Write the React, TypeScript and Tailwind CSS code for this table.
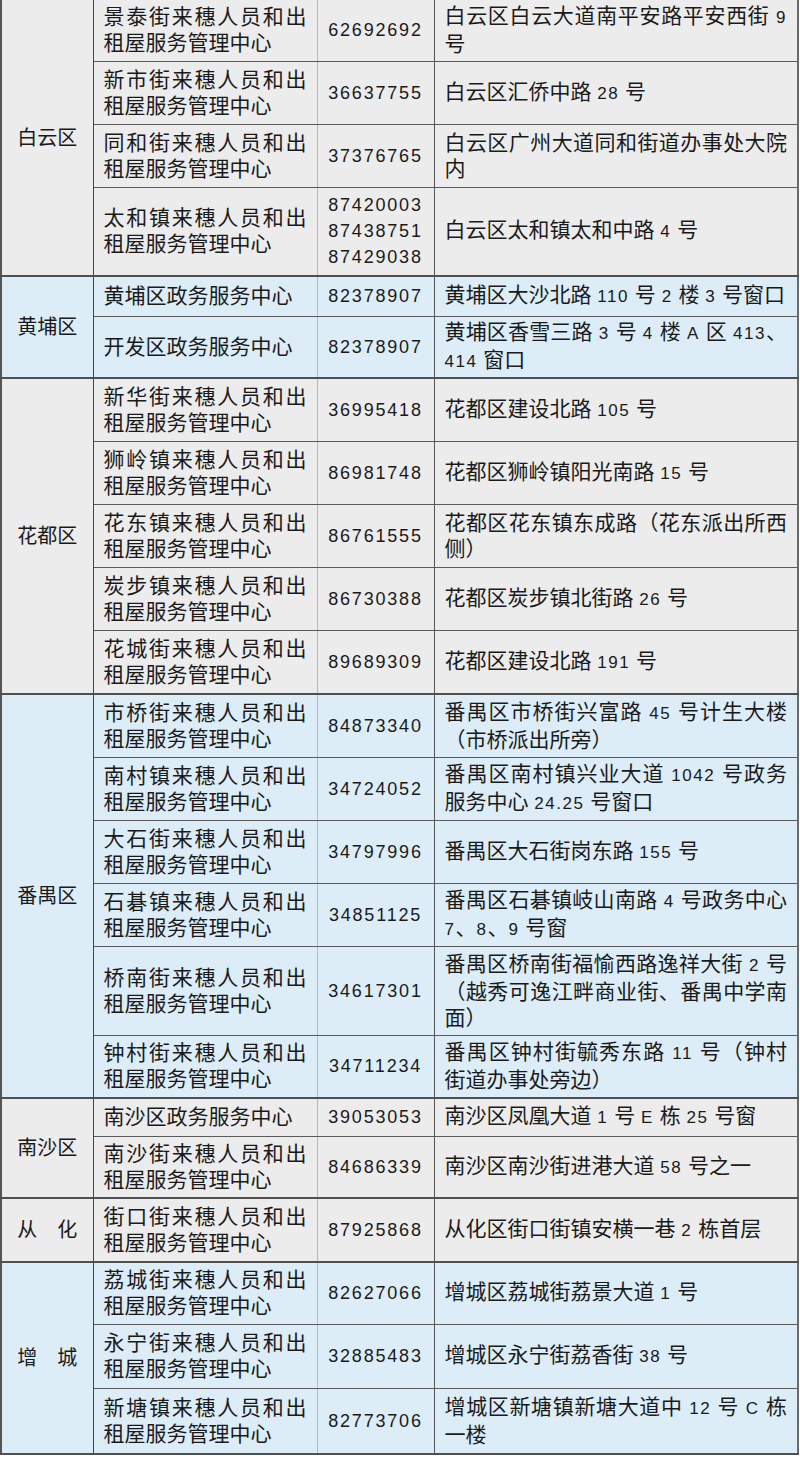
import React from "react";

type Row = { name: string; phone: string[]; addr: string; h: number };
type Group = { district: string; blue: boolean; rows: Row[] };

const heights: Record<number, string> = {
  38: "h-[38px]",
  40: "h-[40px]",
  61: "h-[61px]",
  62: "h-[62px]",
  63: "h-[63px]",
  64: "h-[64px]",
  66: "h-[66px]",
  89: "h-[89px]",
};

const svc = "来穗人员和出租屋服务管理中心";

const groups: Group[] = [
  {
    district: "白云区",
    blue: false,
    rows: [
      { name: "景泰街" + svc, phone: ["62692692"], addr: "白云区白云大道南平安路平安西街 9 号", h: 61 },
      { name: "新市街" + svc, phone: ["36637755"], addr: "白云区汇侨中路 28 号", h: 63 },
      { name: "同和街" + svc, phone: ["37376765"], addr: "白云区广州大道同和街道办事处大院内", h: 63 },
      { name: "太和镇" + svc, phone: ["87420003", "87438751", "87429038"], addr: "白云区太和镇太和中路 4 号", h: 89 },
    ],
  },
  {
    district: "黄埔区",
    blue: true,
    rows: [
      { name: "黄埔区政务服务中心", phone: ["82378907"], addr: "黄埔区大沙北路 110 号 2 楼 3 号窗口", h: 40 },
      { name: "开发区政务服务中心", phone: ["82378907"], addr: "黄埔区香雪三路 3 号 4 楼 A 区 413、414 窗口", h: 62 },
    ],
  },
  {
    district: "花都区",
    blue: false,
    rows: [
      { name: "新华街" + svc, phone: ["36995418"], addr: "花都区建设北路 105 号", h: 63 },
      { name: "狮岭镇" + svc, phone: ["86981748"], addr: "花都区狮岭镇阳光南路 15 号", h: 63 },
      { name: "花东镇" + svc, phone: ["86761555"], addr: "花都区花东镇东成路（花东派出所西侧）", h: 63 },
      { name: "炭步镇" + svc, phone: ["86730388"], addr: "花都区炭步镇北街路 26 号", h: 63 },
      { name: "花城街" + svc, phone: ["89689309"], addr: "花都区建设北路 191 号", h: 64 },
    ],
  },
  {
    district: "番禺区",
    blue: true,
    rows: [
      { name: "市桥街" + svc, phone: ["84873340"], addr: "番禺区市桥街兴富路 45 号计生大楼（市桥派出所旁）", h: 63 },
      { name: "南村镇" + svc, phone: ["34724052"], addr: "番禺区南村镇兴业大道 1042 号政务服务中心 24.25 号窗口", h: 63 },
      { name: "大石街" + svc, phone: ["34797996"], addr: "番禺区大石街岗东路 155 号", h: 63 },
      { name: "石碁镇" + svc, phone: ["34851125"], addr: "番禺区石碁镇岐山南路 4 号政务中心 7、8、9 号窗", h: 63 },
      { name: "桥南街" + svc, phone: ["34617301"], addr: "番禺区桥南街福愉西路逸祥大街 2 号（越秀可逸江畔商业街、番禺中学南面）", h: 89 },
      { name: "钟村街" + svc, phone: ["34711234"], addr: "番禺区钟村街毓秀东路 11 号（钟村街道办事处旁边）", h: 63 },
    ],
  },
  {
    district: "南沙区",
    blue: false,
    rows: [
      { name: "南沙区政务服务中心", phone: ["39053053"], addr: "南沙区凤凰大道 1 号 E 栋 25 号窗", h: 38 },
      { name: "南沙街" + svc, phone: ["84686339"], addr: "南沙区南沙街进港大道 58 号之一", h: 62 },
    ],
  },
  {
    district: "从　化",
    blue: false,
    rows: [{ name: "街口街" + svc, phone: ["87925868"], addr: "从化区街口街镇安横一巷 2 栋首层", h: 64 }],
  },
  {
    district: "增　城",
    blue: true,
    rows: [
      { name: "荔城街" + svc, phone: ["82627066"], addr: "增城区荔城街荔景大道 1 号", h: 62 },
      { name: "永宁街" + svc, phone: ["32885483"], addr: "增城区永宁街荔香街 38 号", h: 64 },
      { name: "新塘镇" + svc, phone: ["82773706"], addr: "增城区新塘镇新塘大道中 12 号 C 栋一楼", h: 66 },
    ],
  },
];

// digits and latin letters are set smaller than the hanzi, like the print
const Txt = ({ s }: { s: string }) => (
  <>
    {s.split(/([0-9A-Z.]+)/).map((part, i) =>
      /^[0-9A-Z.]+$/.test(part) ? (
        <span key={i} className="text-[17px] tracking-[1.5px]">
          {part}
        </span>
      ) : (
        <React.Fragment key={i}>{part}</React.Fragment>
      )
    )}
  </>
);

const App = () => {
  return (
    <div className="min-h-[1459px] w-[800px] bg-white font-['Liberation_Sans','Noto_Sans_CJK_SC',sans-serif] text-[#1a1a1a]">
      <table className="w-[797px] table-fixed border-collapse">
        <colgroup>
          <col className="w-[92px]" />
          <col className="w-[224px]" />
          <col className="w-[117px]" />
          <col className="w-[364px]" />
        </colgroup>
        <tbody>
          {groups.map((g) =>
            g.rows.map((r, i) => {
              const last = i === g.rows.length - 1;
              const bg = g.blue ? "bg-[#dcedf8]" : "bg-[#ececec]";
              const bb = last ? "border-b-2 border-b-[#505050]" : "border-b border-b-[#5a5a5a]";
              return (
                <tr key={g.district + r.name} className={`${heights[r.h]} ${bg}`}>
                  {i === 0 && (
                    <td
                      rowSpan={g.rows.length}
                      className="border-l-2 border-r border-b-2 border-l-[#555] border-r-[#444] border-b-[#505050] text-center text-[20px] leading-[26px]"
                    >
                      {g.district}
                    </td>
                  )}
                  <td className={`${bb} border-r border-r-[#b8b8b8] px-[10px] text-justify text-[21px] leading-[26px]`}>
                    {r.name}
                  </td>
                  <td className={`${bb} border-r border-r-[#555] text-center text-[18px] leading-[26px] tracking-[1.8px]`}>
                    {r.phone.map((p) => (
                      <div key={p}>{p}</div>
                    ))}
                  </td>
                  <td className={`${bb} border-r-2 border-r-[#6a6a6a] px-[10px] text-justify text-[21px] leading-[26px]`}>
                    <Txt s={r.addr} />
                  </td>
                </tr>
              );
            })
          )}
        </tbody>
      </table>
    </div>
  );
};

export default App;
